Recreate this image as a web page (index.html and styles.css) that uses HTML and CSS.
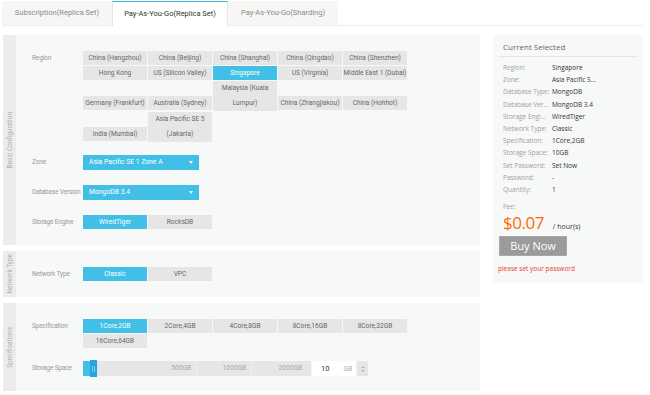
FILE: index.html
```html
<!DOCTYPE html>
<html lang="en">
<head>
  <meta charset="UTF-8">
  <meta name="viewport" content="width=device-width, initial-scale=1.0">
  <title>MongoDB Pay-As-You-Go</title>
  <link rel="stylesheet" href="styles.css">
</head>
<body>
  <div class="page">
    <div class="tabs">
      <div class="tab">Subscription(Replica Set)</div>
      <div class="tab active">Pay-As-You-Go(Replica Set)</div>
      <div class="tab">Pay-As-You-Go(Sharding)</div>
    </div>

    <div class="main">
      <div class="config">

        <div class="section">
          <div class="side"><span>Basic Configuration</span></div>
          <div class="body">
            <div class="row region-row">
              <div class="label">Region</div>
              <div class="options"><span class="opt">China (Hangzhou)</span><span class="opt">China (Beijing)</span><span class="opt">China (Shanghai)</span><span class="opt">China (Qingdao)</span><span class="opt">China (Shenzhen)</span><span class="opt">Hong Kong</span><span class="opt">US (Silicon Valley)</span><span class="opt on">Singapore</span><span class="opt">US (Virginia)</span><span class="opt">Middle East 1 (Dubai)</span><span class="opt">Germany (Frankfurt)</span><span class="opt">Australia (Sydney)</span><span class="opt two">Malaysia (Kuala<br>Lumpur)</span><span class="opt">China (Zhangjiakou)</span><span class="opt">China (Hohhot)</span><span class="opt">India (Mumbai)</span><span class="opt two">Asia Pacific SE 5<br>(Jakarta)</span></div>
            </div>
            <div class="row">
              <div class="label">Zone</div>
              <div class="select">Asia Pacific SE 1 Zone A<i class="caret"></i></div>
            </div>
            <div class="row">
              <div class="label">Database Version</div>
              <div class="select">MongoDB 3.4<i class="caret"></i></div>
            </div>
            <div class="row">
              <div class="label">Storage Engine</div>
              <div class="options"><span class="opt on">WiredTiger</span><span class="opt">RocksDB</span></div>
            </div>
          </div>
        </div>

        <div class="section">
          <div class="side"><span>Network Type</span></div>
          <div class="body">
            <div class="row">
              <div class="label">Network Type</div>
              <div class="options"><span class="opt on">Classic</span><span class="opt">VPC</span></div>
            </div>
          </div>
        </div>

        <div class="section">
          <div class="side"><span>Specifications</span></div>
          <div class="body">
            <div class="row spec-row">
              <div class="label">Specification</div>
              <div class="options"><span class="opt on">1Core,2GB</span><span class="opt">2Core,4GB</span><span class="opt">4Core,8GB</span><span class="opt">8Core,16GB</span><span class="opt">8Core,32GB</span><span class="opt">16Core,64GB</span></div>
            </div>
            <div class="row">
              <div class="label">Storage Space</div>
              <div class="slider">
                <div class="track">
                  <div class="fill"></div>
                  <div class="thumb"><i></i><i></i></div>
                  <span class="mark m1">500GB</span>
                  <span class="mark m2">1000GB</span>
                  <span class="mark m3">2000GB</span>
                </div>
                <div class="num"><span class="val">10</span><span class="unit">GB</span></div>
                <div class="spin"><i class="up"></i><i class="down"></i></div>
              </div>
            </div>
          </div>
        </div>

      </div>

      <div class="summary">
        <div class="title">Current Selected</div>
        <ul class="list">
          <li><span class="k">Region:</span><span class="v">Singapore</span></li>
          <li><span class="k">Zone:</span><span class="v">Asia Pacific S...</span></li>
          <li><span class="k">Database Type:</span><span class="v">MongoDB</span></li>
          <li><span class="k">Database Ver...</span><span class="v">MongoDB 3.4</span></li>
          <li><span class="k">Storage Engi...</span><span class="v">WiredTiger</span></li>
          <li><span class="k">Network Type:</span><span class="v">Classic</span></li>
          <li><span class="k">Specification:</span><span class="v">1Core,2GB</span></li>
          <li><span class="k">Storage Space:</span><span class="v">10GB</span></li>
          <li><span class="k">Set Password:</span><span class="v">Set Now</span></li>
          <li><span class="k">Password:</span><span class="v">-</span></li>
          <li><span class="k">Quantity:</span><span class="v">1</span></li>
        </ul>
        <div class="fee">Fee:</div>
        <div class="price"><span class="amount">$0.07</span><span class="per">/ hour(s)</span></div>
        <button type="button" class="buy">Buy Now</button>
        <div class="warn">please set your password</div>
      </div>
    </div>
  </div>
</body>
</html>
```

FILE: styles.css
```css
body {
  margin: 0;
  background: #ffffff;
  font-family: Roboto, "Liberation Sans", sans-serif;
  color: #333333;
}

.page {
  width: 641px;
  padding: 1px 7px 0 2px;
}

/* tabs */
.tabs {
  display: flex;
  height: 24px;
  border-bottom: 1px solid #efefef;
}

.tab {
  width: 110px;
  height: 24px;
  line-height: 24px;
  background: #f7f6f4;
  color: #8a8a8a;
  font-size: 7.5px;
  text-align: center;
}

.tab.active {
  width: 114px;
  height: 24px;
  line-height: 23px;
  background: #ffffff;
  color: #333333;
  border-top: 1px solid #3db6e2;
  border-left: 1px solid #e6e6e6;
  border-right: 1px solid #e6e6e6;
  margin-bottom: -1px;
}

/* layout */
.main {
  display: flex;
  align-items: flex-start;
  gap: 13px;
  margin-top: 9px;
  padding-left: 1px;
}

.config {
  width: 477px;
  display: flex;
  flex-direction: column;
  gap: 6px;
}

.section {
  display: flex;
  background: #f7f8f8;
}

.side {
  width: 13px;
  background: #ececec;
  display: flex;
  align-items: center;
  justify-content: center;
}

.side span {
  writing-mode: vertical-rl;
  transform: rotate(180deg);
  font-size: 6.5px;
  color: #b0b0b0;
  white-space: nowrap;
}

.body {
  flex: 1;
  padding: 16px 0 15px 16px;
}

.row {
  display: flex;
  align-items: flex-start;
  margin-bottom: 15px;
}

.row:last-child {
  margin-bottom: 0;
}

.region-row {
  margin-bottom: 12px;
}

.spec-row {
  margin-bottom: 12px;
}

.label {
  width: 51px;
  flex-shrink: 0;
  font-size: 6.6px;
  line-height: 15px;
  letter-spacing: -0.2px;
  color: #9a9a9a;
  white-space: nowrap;
}

/* option buttons */
.options {
  width: 325px;
  font-size: 0;
  line-height: 0;
}

.opt {
  display: inline-block;
  width: 64px;
  margin: 0 1px 1px 0;
  background: #e6e6e6;
  color: #666666;
  font-size: 6.6px;
  line-height: 14px;
  text-align: center;
  white-space: nowrap;
  vertical-align: baseline;
}

.opt.two {
  line-height: 15px;
}

.opt.on {
  background: #41bfe6;
  color: #ffffff;
}

/* dropdowns */
.select {
  position: relative;
  width: 110px;
  height: 15px;
  padding-left: 6px;
  background: #41bfe6;
  color: #ffffff;
  font-size: 6.8px;
  line-height: 15px;
}

.caret {
  position: absolute;
  right: 6px;
  top: 6px;
  border-left: 2.5px solid transparent;
  border-right: 2.5px solid transparent;
  border-top: 3px solid #ffffff;
}

/* storage slider */
.slider {
  display: flex;
  align-items: center;
  height: 15px;
}

.track {
  position: relative;
  display: flex;
  justify-content: flex-end;
  width: 228px;
  height: 15px;
  background: #e6e6e6;
}

.fill {
  position: absolute;
  left: 0;
  top: 0;
  width: 10px;
  height: 15px;
  background: #41bfe6;
}

.thumb {
  position: absolute;
  left: 7px;
  top: -1px;
  width: 7px;
  height: 17px;
  background: #22a7d6;
  display: flex;
  justify-content: center;
  align-items: center;
  gap: 1px;
}

.thumb i {
  width: 1px;
  height: 6px;
  background: #7fd0ec;
}

.mark {
  font-size: 6.6px;
  line-height: 15px;
  color: #a6a6a6;
  text-align: right;
  padding-right: 5px;
  border-right: 1px solid #f1f1f1;
}

.m1 { width: 108px; }
.m2 { width: 49px; }
.m3 { width: 50px; padding-right: 9px; border-right: none; }

.num {
  display: flex;
  align-items: center;
  width: 43px;
  height: 15px;
  margin-left: 1px;
  background: #ffffff;
  font-size: 7.5px;
}

.num .val {
  margin-left: 9px;
  color: #333333;
}

.num .unit {
  margin-left: 14px;
  font-size: 6.6px;
  color: #aaaaaa;
}

.spin {
  width: 11px;
  height: 15px;
  margin-left: 2px;
  background: #e6e6e6;
  display: flex;
  flex-direction: column;
  align-items: center;
  justify-content: center;
  gap: 2px;
}

.spin .up {
  border-left: 2px solid transparent;
  border-right: 2px solid transparent;
  border-bottom: 2.5px solid #b5b5b5;
}

.spin .down {
  border-left: 2px solid transparent;
  border-right: 2px solid transparent;
  border-top: 2.5px solid #b5b5b5;
}

/* summary panel */
.summary {
  width: 140px;
  height: 236px;
  padding: 6px 5px;
  background: #f7f8f8;
  font-family: "Open Sans", "Noto Sans", sans-serif;
}

.title {
  padding: 0 5px 4px;
  font-size: 8px;
  line-height: 11px;
  color: #666666;
  border-bottom: 1px solid #e6e6e6;
}

.list {
  list-style: none;
  margin: 5px 0 0;
  padding: 0 5px;
}

.list li {
  display: flex;
  font-size: 6.5px;
  line-height: 12.2px;
}

.k {
  width: 49px;
  flex-shrink: 0;
  color: #a0a0a0;
  white-space: nowrap;
}

.v {
  color: #333333;
  white-space: nowrap;
}

.fee {
  margin-top: 5px;
  padding: 0 5px;
  font-size: 6.5px;
  line-height: 12px;
  color: #a0a0a0;
}

.price {
  display: flex;
  align-items: baseline;
  padding: 0 5px;
  height: 22px;
}

.amount {
  font-size: 17px;
  line-height: 20px;
  letter-spacing: -0.5px;
  color: #ff6a00;
}

.per {
  margin-left: 9px;
  font-size: 7px;
  color: #333333;
}

.buy {
  display: block;
  width: 68px;
  height: 20px;
  margin: 1px 0 0 1px;
  padding: 0;
  border: 1px solid #a8a8a8;
  background: #9b9b9b;
  color: #ffffff;
  font-family: "Open Sans", "Noto Sans", sans-serif;
  font-size: 11px;
  line-height: 18px;
}

.warn {
  margin-top: 8px;
  font-size: 6.5px;
  line-height: 10px;
  color: #ee3a2f;
}
```
